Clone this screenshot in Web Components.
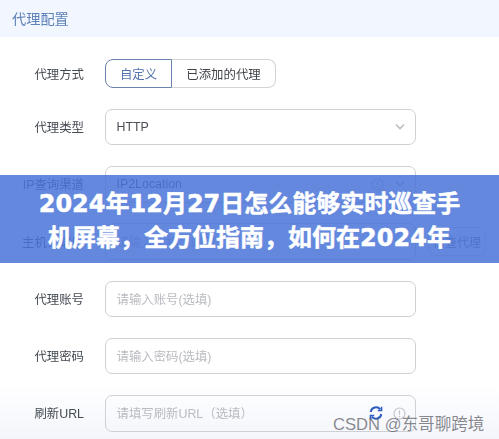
<!DOCTYPE html>
<html lang="zh"><head><meta charset="utf-8"><title>代理配置</title>
<style>
html,body{margin:0;padding:0;background:#fff}
body{width:499px;height:439px;overflow:hidden;position:relative;font-family:"Liberation Sans","Noto Sans CJK SC",sans-serif}
</style></head><body>
<proxy-panel>
  <form-row label="代理方式"><seg-control></seg-control></form-row>
  <form-row label="代理类型"><field-box value="HTTP" chevron></field-box></form-row>
  <form-row label="IP查询渠道"><field-box value="IP2Location" chevron info></field-box></form-row>
  <form-row label="主机：端口"><field-box placeholder="请输入主机：端口" chevron></field-box><ghost-btn>检查代理</ghost-btn></form-row>
  <form-row label="代理账号"><field-box placeholder="请输入账号(选填)"></field-box></form-row>
  <form-row label="代理密码"><field-box placeholder="请输入密码(选填)"></field-box></form-row>
  <form-row label="刷新URL"><field-box placeholder="请填写刷新URL（选填）" refresh info></field-box></form-row>
</proxy-panel>
<title-banner>2024年12月27日怎么能够实时巡查手机屏幕，全方位指南，如何在2024年</title-banner>
<water-mark>CSDN @东哥聊跨境</water-mark>
<script>
function def(name, css, html){
  customElements.define(name, class extends HTMLElement{
    constructor(){super();this.attachShadow({mode:'open'});}
    connectedCallback(){
      this.shadowRoot.innerHTML='<style>'+css+'</style>'+(typeof html==='function'?html(this):html);
    }
  });
}
const UI='"Liberation Sans","Noto Sans CJK SC",sans-serif';
def('proxy-panel',`
:host{display:block;width:499px;height:439px;background:linear-gradient(#fff 385px,#f3f5fb 439px);filter:blur(.35px)}
.head{height:37px;background:#f2f6fe;display:flex;align-items:center;padding:0 0 2px 12px;box-sizing:border-box;font:14.2px ${UI};color:#5f82b8}
.body{display:flex;flex-direction:column;gap:20.7px;padding-top:22px}
`,`<div class="head">代理配置</div><div class="body"><slot></slot></div>`);
def('form-row',`
:host{display:flex;align-items:center}
.l{width:84px;flex:none;text-align:right;font:12.4px ${UI};color:#444a52;white-space:nowrap}
.c{margin-left:21px;display:flex;align-items:center;gap:12px;flex:1}
`,h=>`<div class="l">${h.getAttribute('label')}</div><div class="c"><slot></slot></div>`);
def('seg-control',`
:host{display:flex;height:29px;font:12.4px ${UI}}
div{display:flex;align-items:center;justify-content:center;box-sizing:border-box;height:29px}
.a{width:67px;border:1px solid #6b83ac;border-radius:8px 0 0 8px;color:#5473ad}
.b{width:104px;border:1px solid #d4d4d6;border-left:0;border-radius:0 8px 8px 0;color:#3f4348}
`,`<div class="a">自定义</div><div class="b">已添加的代理</div>`);
const chev=`<svg width="12" height="8" viewBox="0 0 12 8"><path d="M2 1.5 6 5.5 10 1.5" fill="none" stroke="#bcbfc4" stroke-width="1.6"/></svg>`;
const info=`<svg width="13" height="13" viewBox="0 0 13 13"><circle cx="6.5" cy="6.5" r="5.5" fill="none" stroke="#bfc1c6" stroke-width="1.1"/><path d="M6.5 3.2V7.4M6.5 8.8V10" stroke="#bfc1c6" stroke-width="1.1"/></svg>`;
const refresh=`<svg width="14" height="14" viewBox="0 0 14 14" fill="none" stroke="#2f5cc0" stroke-width="1.9"><path d="M1.7 6A5.4 5.4 0 0 1 11.3 3.4"/><path d="M12.3 8A5.4 5.4 0 0 1 2.7 10.6"/><path d="M12.6 .8V4.6H8.8" stroke-width="1.5"/><path d="M1.4 13.2V9.4H5.2" stroke-width="1.5"/></svg>`;
def('field-box',`
:host{display:flex;box-sizing:border-box;width:311px;height:36.6px;flex:none;align-items:center;border:1px solid #cfd0d3;border-radius:7px;padding:0 9px 0 10.5px;font:12.4px ${UI}}
.v{flex:1;color:#4a4e55;white-space:nowrap}
.p{flex:1;color:#b9bbc0;white-space:nowrap}
.i{display:flex;align-items:center;gap:10px}
`,h=>{
  const a=n=>h.hasAttribute(n);
  const t=a('value')?`<span class="v">${h.getAttribute('value')}</span>`:`<span class="p">${h.getAttribute('placeholder')}</span>`;
  return t+`<span class="i">${a('refresh')?refresh:''}${a('info')?info:''}${a('chevron')?chev:''}</span>`;
});
def('ghost-btn',`
:host{display:flex;box-sizing:border-box;width:58px;height:29px;align-items:center;justify-content:center;border:1px solid #d6d8dc;border-radius:7px;font:12px ${UI};color:#6b6f78;white-space:nowrap}
`,`<slot></slot>`);
def('title-banner',`
:host{position:absolute;left:0;top:175px;width:499px;height:88px;box-sizing:border-box;background:rgba(73,115,215,.85);display:flex;align-items:center;justify-content:center;padding:4px 38px 0}
div{color:#fff;font:700 24px/34px "DejaVu Sans","Noto Sans CJK SC",sans-serif;-webkit-text-stroke:.45px #fff;text-align:center;width:423px}
`,`<div><slot></slot></div>`);
def('water-mark',`
:host{position:absolute;left:333px;top:411px;font:16.6px "Liberation Sans","Noto Sans CJK SC",sans-serif;color:rgba(90,92,98,.72);white-space:nowrap}
`,`<slot></slot>`);
</script>
</body></html>
